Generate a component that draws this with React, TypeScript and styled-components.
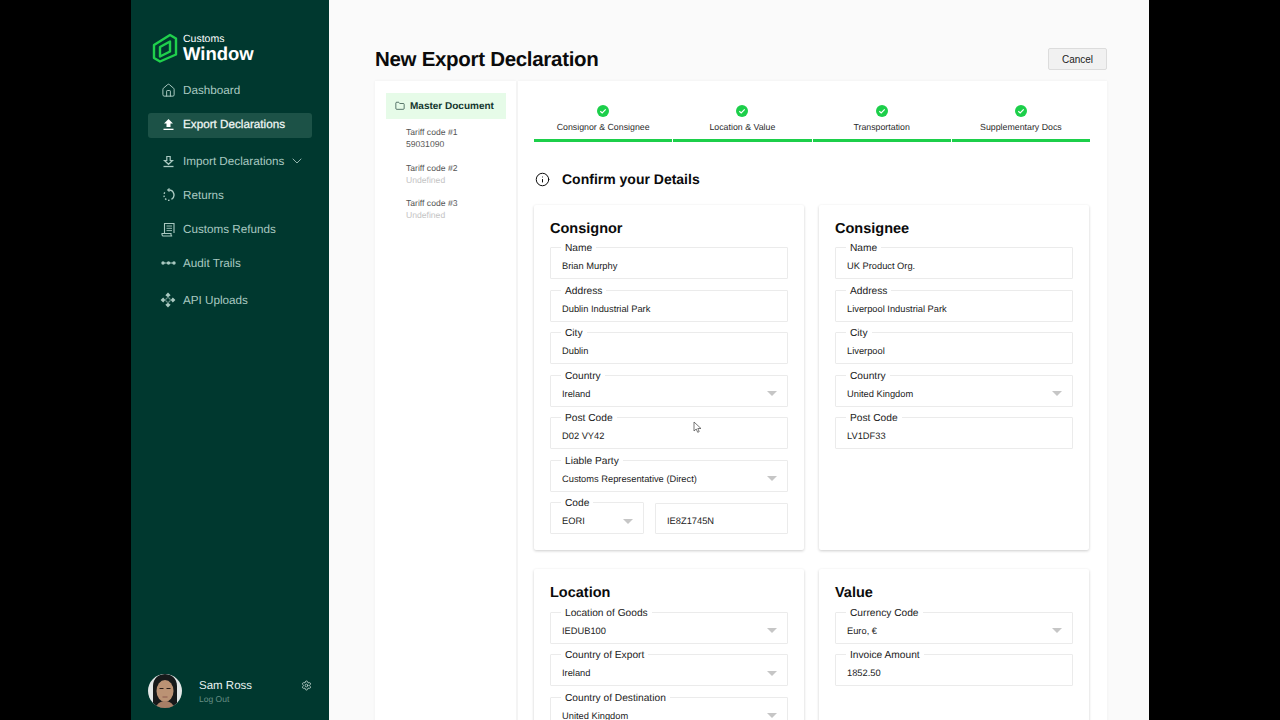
import React from 'react';
import styled, {createGlobalStyle} from 'styled-components';
import {ChevronDown, Folder, House, Info, Settings} from 'lucide-react';

const GlobalStyle = createGlobalStyle`
    html, body {
        margin: 0;
        height: 720px;
        overflow: hidden;
        background: #000;
        font-family: "Liberation Sans", Arial, sans-serif;
        text-rendering: geometricPrecision;
    }
    * { box-sizing: border-box; }
`

const Page = styled.div`
    position: relative;
    display: flex;
    width: 1280px;
    height: 720px;
    padding: 0 131px;
    background: #000;
    overflow: hidden;
`
const Sidebar = styled.aside`
    display: flex;
    flex-direction: column;
    flex: 0 0 198px;
    padding: 31px 17px 12px;
    background: #00382f;
`
const Brand = styled.div`
    display: flex;
    align-items: center;
    gap: 5px;
    height: 33px;
    margin: 0 0 9px 4px;
`
const BrandText = styled.div`
    display: flex;
    flex-direction: column;
    color: #fff;
`
const BrandTop = styled.span`
    font-size: 10.5px;
    line-height: 11px;
`
const BrandName = styled.span`
    font-size: 18.5px;
    line-height: 17px;
    font-weight: 700;
`
const Nav = styled.nav`
    display: flex;
    flex-direction: column;
`
const NavItem = styled.div<{$active?: boolean; $spaced?: boolean}>`
    display: flex;
    align-items: center;
    height: ${p => (p.$active ? '25px' : '34px')};
    margin: ${p => (p.$active ? '6px 0' : p.$spaced ? '3px 0 0' : '0')};
    padding: 0 0 ${p => (p.$active ? '2px' : '0')} 13px;
    gap: 8px;
    border-radius: 3px;
    background: ${p => (p.$active ? '#1c5247' : 'transparent')};
    color: ${p => (p.$active ? '#f2f8f6' : '#a9c9c1')};
    font-size: 11.7px;
    -webkit-text-stroke: ${p => (p.$active ? '.25px' : '0')};
    svg { flex: none; }
`
const NavIcon = styled.span`
    display: flex;
    justify-content: center;
    width: 14px;
`
const MoreIcon = styled.span`
    display: flex;
    margin-left: -3px;
`
const UserRow = styled.div`
    display: flex;
    align-items: center;
    margin-top: auto;
`
const UserText = styled.div`
    display: flex;
    flex-direction: column;
    gap: 1px;
    margin: 2px 0 0 17px;
    flex: 1;
`
const UserName = styled.span`
    color: #e8f2ef;
    font-size: 11.5px;
    line-height: 13px;
`
const LogOut = styled.span`
    color: #668f85;
    font-size: 8.5px;
    line-height: 10px;
`
const GearSlot = styled.span`
    display: flex;
    margin: 0 0 12px;
    color: #d5e5e1;
`

const Main = styled.main`
    flex: 1;
    display: flex;
    flex-direction: column;
    padding: 48px 42px 0 46px;
    background: #fafafa;
    min-width: 0;
`
const Header = styled.header`
    display: flex;
    align-items: center;
    justify-content: space-between;
    height: 22px;
    margin-bottom: 11px;
`
const Title = styled.h1`
    margin: 2px 0 0;
    color: #0b0b0b;
    font-size: 20.5px;
    letter-spacing: -.3px;
    font-weight: 700;
`
const CancelButton = styled.button`
    width: 59px;
    height: 22px;
    padding: 0;
    border: 1px solid #dcdcdc;
    border-radius: 2px;
    background: #f1f1f1;
    color: #222;
    font: 400 10px "Liberation Sans", Arial, sans-serif;
`
const Panels = styled.div`
    display: flex;
    gap: 2px;
    flex: 1;
`
const TreePanel = styled.div`
    flex: 0 0 141px;
    padding: 12px 10px 12px 11px;
    background: #fff;
    box-shadow: 0 0 3px rgba(0, 0, 0, .05);
`
const MasterRow = styled.div`
    display: flex;
    align-items: center;
    gap: 5px;
    height: 26px;
    margin-bottom: 7px;
    padding-left: 9px;
    background: #e6fbe8;
    color: #12352d;
    font-size: 10px;
    font-weight: 700;
`
const TariffItem = styled.div`
    margin: 0 0 11.5px 20px;
    font-size: 8.6px;
    line-height: 12px;
    color: #555;
`
const TariffValue = styled.div<{$empty?: boolean}>`
    color: ${p => (p.$empty ? '#c4c4c4' : '#555')};
`
const FormPanel = styled.div`
    flex: 1;
    padding: 0 17px 0 16px;
    background: #fff;
    box-shadow: 0 0 3px rgba(0, 0, 0, .05);
`
const Stepper = styled.div`
    display: grid;
    grid-template-columns: repeat(4, 1fr);
    gap: 1px;
    padding-top: 24px;
`
const Step = styled.div`
    display: flex;
    flex-direction: column;
    align-items: center;
    gap: 4.5px;
    height: 37px;
    border-bottom: 3px solid #1ccf4a;
    color: #2b2b2b;
    font-size: 8.8px;
    line-height: 11px;
`
const SectionHeading = styled.div`
    display: flex;
    align-items: center;
    gap: 12px;
    height: 20px;
    margin: 27px 0 16px 1px;
    color: #0b0b0b;
    font-size: 14px;
    font-weight: 700;
`
const CardGrid = styled.div`
    display: grid;
    grid-template-columns: 270px 270px;
    column-gap: 15px;
    row-gap: 19px;
`
const Card = styled.section`
    display: flex;
    flex-direction: column;
    gap: 4.5px;
    padding: 16px 16px 15.5px;
    border-radius: 2px;
    background: #fff;
    box-shadow: 0 1px 3px rgba(0, 0, 0, .2);
`
const CardTitle = styled.h2<{$tall?: boolean}>`
    margin: 0;
    height: ${p => (p.$tall ? '16.5px' : '15.5px')};
    color: #0b0b0b;
    font-size: 14.5px;
    line-height: 16px;
    font-weight: 700;
`
const FieldBox = styled.fieldset`
    min-width: 0;
    margin: 0;
    padding: 0 10px 0 11px;
    border: 1px solid #ebebeb;
    border-radius: 1px;
`
const FieldLegend = styled.legend`
    margin-left: -1px;
    padding: 2px 4px 0;
    color: #222;
    font-size: 10.2px;
    line-height: 11px;
`
const FieldValue = styled.div`
    display: flex;
    align-items: center;
    justify-content: space-between;
    height: 24px;
    color: #1c1c1c;
    font-size: 9.3px;
`
const Caret = styled.span`
    width: 0;
    height: 0;
    border-left: 5.5px solid transparent;
    border-right: 5.5px solid transparent;
    border-top: 5px solid #c6c6c6;
`
const FieldRow = styled.div`
    display: flex;
    align-items: flex-end;
    gap: 11px;
`
const CodeSlot = styled.div`
    flex: 0 0 94px;
    & > fieldset { width: 100%; }
`
const ValueSlot = styled.div`
    flex: 1;
    & > fieldset {
        height: 31px;
        padding-top: 5px;
    }
`
const Pointer = styled.svg`
    position: absolute;
    left: 693px;
    top: 421px;
`

const Field = ({label, value, select}: {label?: string; value: string; select?: boolean}) => (
    <FieldBox>
        {label && <FieldLegend>{label}</FieldLegend>}
        <FieldValue>
            {value}
            {select && <Caret/>}
        </FieldValue>
    </FieldBox>
);

const Logo = () => (
    <svg width="26" height="30" viewBox="0 0 26 30" fill="none" stroke="#1fd04c" strokeWidth="2.400" strokeLinejoin="round">
        <path d="M2 12 18 2l6 3.500v16L8 28.500l-6-3.500z"/>
        <path d="M8 14 18 8.500v10L8 23.500z"/>
    </svg>
);
const ExportIcon = () => (
    <svg width="13" height="13" viewBox="0 0 13 13" fill="#fff">
        <path d="M6.500 1 11 5.500H8.500V9h-4V5.500H2z"/>
        <rect x="1.500" y="10.700" width="10" height="1.300"/>
    </svg>
);
const ImportIcon = () => (
    <svg width="13" height="13" viewBox="0 0 13 13" fill="none" stroke="#a9c9c1" strokeWidth="1.200">
        <path d="M4.800 1.500h3.400v4h2.300L6.500 9.300 2.500 5.500h2.300z"/>
        <path d="M1.500 11.500h10" strokeWidth="1.300"/>
    </svg>
);
const ReturnsIcon = () => (
    <svg width="13" height="14" viewBox="0 0 13 14" fill="none" stroke="#a9c9c1" strokeWidth="1.400">
        <path d="M7 2a5 5 0 0 1 2.500 9.300"/>
        <path d="M7.500 .5 5.700 2l1.800 1.500" strokeWidth="1.100"/>
        <path d="M7.500 12.300a5 5 0 0 1-5.500-4.500 5 5 0 0 1 1-3.600" strokeDasharray="1.500 1.700"/>
    </svg>
);
const RefundIcon = () => (
    <svg width="14" height="15" viewBox="0 0 14 15" fill="none" stroke="#a9c9c1" strokeWidth="1.100">
        <path d="M3.500 11V1.500h9.500V11"/>
        <path d="M5.500 4h5.500M5.500 6.300h5.500M5.500 8.600h5.500" strokeWidth=".9"/>
        <path d="M1 11.500h9v1.300c0 .7.500 1.200 1.200 1.200H2.500C1.600 14 1 13.300 1 12.500z"/>
    </svg>
);
const TrailIcon = () => (
    <svg width="15" height="6" viewBox="0 0 15 6" fill="#a9c9c1">
        <circle cx="2" cy="3" r="1.700"/>
        <circle cx="7.500" cy="3" r="1.700"/>
        <circle cx="13" cy="3" r="1.700"/>
        <rect x="2" y="2.500" width="11" height="1"/>
    </svg>
);
const ApiIcon = () => (
    <svg width="16" height="16" viewBox="0 0 16 16" fill="#a9c9c1">
        <path d="M8 .6 10.600 3.200 8 5.300 5.400 3.200z"/>
        <path d="M8 10.700 10.600 12.800 8 15.400 5.400 12.800z"/>
        <path d="M3.200 5.400 5.300 8 3.200 10.600 .6 8z"/>
        <path d="M12.800 5.400 15.400 8 12.800 10.600 10.700 8z"/>
        <circle cx="8" cy="8" r="2.300" fill="none" stroke="#a9c9c1" strokeWidth=".7"/>
    </svg>
);
const Avatar = () => (
    <svg width="34" height="34" viewBox="0 0 34 34">
        <clipPath id="avatar-clip"><circle cx="17" cy="17" r="17"/></clipPath>
        <g clipPath="url(#avatar-clip)">
            <rect width="34" height="34" fill="#e3e7e7"/>
            <path d="M5 34V12C5 4 11 0 17 0s12 4 12 12v22z" fill="#17191a"/>
            <ellipse cx="17" cy="17" rx="8.500" ry="11" fill="#bb9274"/>
            <path d="M8 34c1-5 5-7 9-7s8 2 9 7z" fill="#a87f66"/>
            <path d="M11.500 14.500h4M18.500 14.500h4" stroke="#2a1d18" strokeWidth="1"/>
            <path d="M14.500 23h5" stroke="#8d5a4f" strokeWidth="1"/>
        </g>
    </svg>
);
const StepCheck = () => (
    <svg width="12" height="12" viewBox="0 0 12 12">
        <circle cx="6" cy="6" r="6" fill="#1ccf4a"/>
        <path d="M3.300 6.200 5.200 8l3.500-3.700" fill="none" stroke="#fff" strokeWidth="1.200"/>
    </svg>
);

const navItems = [
    {label: 'Dashboard', icon: <House size={15} strokeWidth={1.6}/>},
    {label: 'Export Declarations', icon: <ExportIcon/>, active: true},
    {label: 'Import Declarations', icon: <ImportIcon/>, more: true},
    {label: 'Returns', icon: <ReturnsIcon/>},
    {label: 'Customs Refunds', icon: <RefundIcon/>},
    {label: 'Audit Trails', icon: <TrailIcon/>},
    {label: 'API Uploads', icon: <ApiIcon/>, spaced: true},
];
const steps = ['Consignor & Consignee', 'Location & Value', 'Transportation', 'Supplementary Docs'];
const tariffs = [
    {code: 'Tariff code #1', value: '59031090'},
    {code: 'Tariff code #2', value: 'Undefined', empty: true},
    {code: 'Tariff code #3', value: 'Undefined', empty: true},
];

const App = () => {
    return (
        <Page>
            <GlobalStyle/>
            <Sidebar>
                <Brand>
                    <Logo/>
                    <BrandText>
                        <BrandTop>Customs</BrandTop>
                        <BrandName>Window</BrandName>
                    </BrandText>
                </Brand>
                <Nav>
                    {navItems.map(item => (
                        <NavItem key={item.label} $active={item.active} $spaced={item.spaced}>
                            <NavIcon>{item.icon}</NavIcon>
                            {item.label}
                            {item.more && <MoreIcon><ChevronDown size={16} strokeWidth={1.3}/></MoreIcon>}
                        </NavItem>
                    ))}
                </Nav>
                <UserRow>
                    <Avatar/>
                    <UserText>
                        <UserName>Sam Ross</UserName>
                        <LogOut>Log Out</LogOut>
                    </UserText>
                    <GearSlot><Settings size={11} strokeWidth={1.6}/></GearSlot>
                </UserRow>
            </Sidebar>
            <Main>
                <Header>
                    <Title>New Export Declaration</Title>
                    <CancelButton>Cancel</CancelButton>
                </Header>
                <Panels>
                    <TreePanel>
                        <MasterRow>
                            <Folder size={10} strokeWidth={1.6}/>
                            Master Document
                        </MasterRow>
                        {tariffs.map(t => (
                            <TariffItem key={t.code}>
                                {t.code}
                                <TariffValue $empty={t.empty}>{t.value}</TariffValue>
                            </TariffItem>
                        ))}
                    </TreePanel>
                    <FormPanel>
                        <Stepper>
                            {steps.map(s => (
                                <Step key={s}>
                                    <StepCheck/>
                                    {s}
                                </Step>
                            ))}
                        </Stepper>
                        <SectionHeading>
                            <Info size={15} strokeWidth={1.6}/>
                            Confirm your Details
                        </SectionHeading>
                        <CardGrid>
                            <Card>
                                <CardTitle>Consignor</CardTitle>
                                <Field label="Name" value="Brian Murphy"/>
                                <Field label="Address" value="Dublin Industrial Park"/>
                                <Field label="City" value="Dublin"/>
                                <Field label="Country" value="Ireland" select/>
                                <Field label="Post Code" value="D02 VY42"/>
                                <Field label="Liable Party" value="Customs Representative (Direct)" select/>
                                <FieldRow>
                                    <CodeSlot><Field label="Code" value="EORI" select/></CodeSlot>
                                    <ValueSlot><Field value="IE8Z1745N"/></ValueSlot>
                                </FieldRow>
                            </Card>
                            <Card>
                                <CardTitle>Consignee</CardTitle>
                                <Field label="Name" value="UK Product Org."/>
                                <Field label="Address" value="Liverpool Industrial Park"/>
                                <Field label="City" value="Liverpool"/>
                                <Field label="Country" value="United Kingdom" select/>
                                <Field label="Post Code" value="LV1DF33"/>
                            </Card>
                            <Card>
                                <CardTitle $tall>Location</CardTitle>
                                <Field label="Location of Goods" value="IEDUB100" select/>
                                <Field label="Country of Export" value="Ireland" select/>
                                <Field label="Country of Destination" value="United Kingdom" select/>
                            </Card>
                            <Card>
                                <CardTitle $tall>Value</CardTitle>
                                <Field label="Currency Code" value="Euro, €" select/>
                                <Field label="Invoice Amount" value="1852.50"/>
                            </Card>
                        </CardGrid>
                    </FormPanel>
                </Panels>
            </Main>
            <Pointer width="9" height="13" viewBox="0 0 9 13">
                <path d="M1 1v9l2.200-2 1.500 3.300 1.500-.7L4.800 7.500H8z" fill="#fff" stroke="#555" strokeWidth=".8"/>
            </Pointer>
        </Page>
    );
};

export default App;
